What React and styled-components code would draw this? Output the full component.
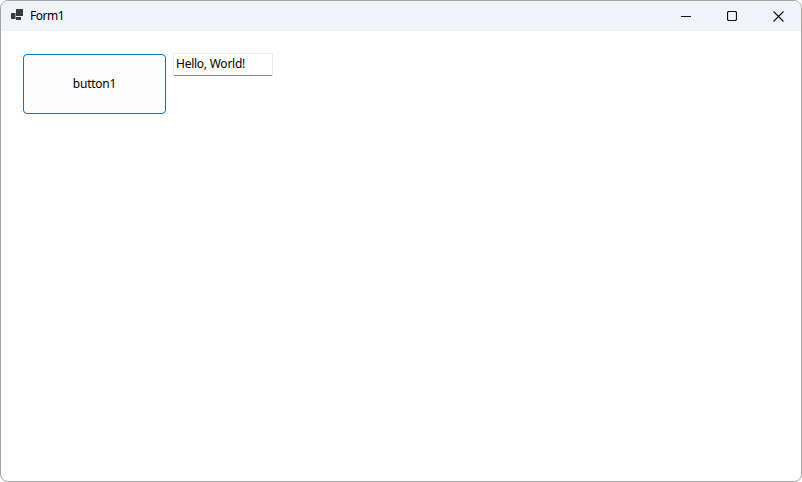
import React from "react";
import styled, { createGlobalStyle } from "styled-components";

const GlobalStyle = createGlobalStyle`
  html, body {
    margin: 0;
    padding: 0;
    background: #ffffff;
  }
  body {
    font-family: "Noto Sans", "Open Sans", "Liberation Sans", sans-serif;
    font-size: 12px;
    letter-spacing: -0.25px;
    color: #000000;
  }
`;

const Window = styled("div")`
  box-sizing: border-box;
  width: 802px;
  height: 482px;
  display: flex;
  flex-direction: column;
  background: #ffffff;
  border: 1px solid #a4a4a4;
  border-radius: 8px;
  overflow: hidden;
`;

const TitleBar = styled("header")`
  height: 30px;
  flex: none;
  display: flex;
  align-items: center;
  background: #eff3fa;
`;

const AppIcon = styled("svg")`
  width: 12px;
  height: 12px;
  margin: 0 0 2px 10px;
  flex: none;
`;

const Title = styled("span")`
  margin-left: 7px;
  flex: 1;
  font-size: 12px;
  line-height: 16px;
  letter-spacing: -0.5px;
`;

const Controls = styled("div")`
  display: flex;
  align-self: stretch;
`;

const ControlButton = styled("div")`
  width: 46px;
  display: flex;
  align-items: center;
  justify-content: center;
  color: #111111;
`;

const Content = styled("main")`
  flex: 1;
  display: flex;
  align-items: flex-start;
  gap: 7px;
  padding: 22px 0 0 22px;
`;

const Button = styled("button")`
  box-sizing: border-box;
  width: 143px;
  height: 60px;
  margin-top: 1px;
  padding: 0 0 2px;
  background: #fdfdfd;
  border: 1px solid #0078d4;
  border-radius: 4px;
  font: inherit;
  letter-spacing: inherit;
  color: #000000;
`;

const TextBox = styled("input")`
  box-sizing: border-box;
  width: 100px;
  height: 23px;
  padding: 0 2px 2px;
  background: #ffffff;
  border: 1px solid #ececec;
  border-bottom: 1px solid #868686;
  border-radius: 2px;
  outline: none;
  font: inherit;
  letter-spacing: inherit;
  color: #000000;
`;

export default function App() {
  return (
    <Window>
      <GlobalStyle />
      <TitleBar>
        <AppIcon viewBox="0 0 12 12">
          <rect x="0" y="4" width="4.5" height="6" fill="#3a3a3a" />
          <rect x="5" y="0" width="7" height="7" fill="#3a3a3a" />
          <rect x="5" y="8" width="5" height="3" fill="#3a3a3a" />
        </AppIcon>
        <Title>Form1</Title>
        <Controls>
          <ControlButton>
            <svg width="10" height="10" viewBox="0 0 10 10">
              <path d="M0 5.5H10" stroke="currentColor" fill="none" />
            </svg>
          </ControlButton>
          <ControlButton>
            <svg width="10" height="10" viewBox="0 0 10 10">
              <rect x="0.5" y="0.5" width="9" height="9" rx="1.5" stroke="currentColor" strokeWidth="1.2" fill="none" />
            </svg>
          </ControlButton>
          <ControlButton>
            <svg width="11" height="11" viewBox="0 0 11 11">
              <path d="M0.5 0.5L10.5 10.5M10.5 0.5L0.5 10.5" stroke="currentColor" strokeWidth="1.1" fill="none" />
            </svg>
          </ControlButton>
        </Controls>
      </TitleBar>
      <Content>
        <Button>button1</Button>
        <TextBox readOnly value="Hello, World!" />
      </Content>
    </Window>
  );
}
